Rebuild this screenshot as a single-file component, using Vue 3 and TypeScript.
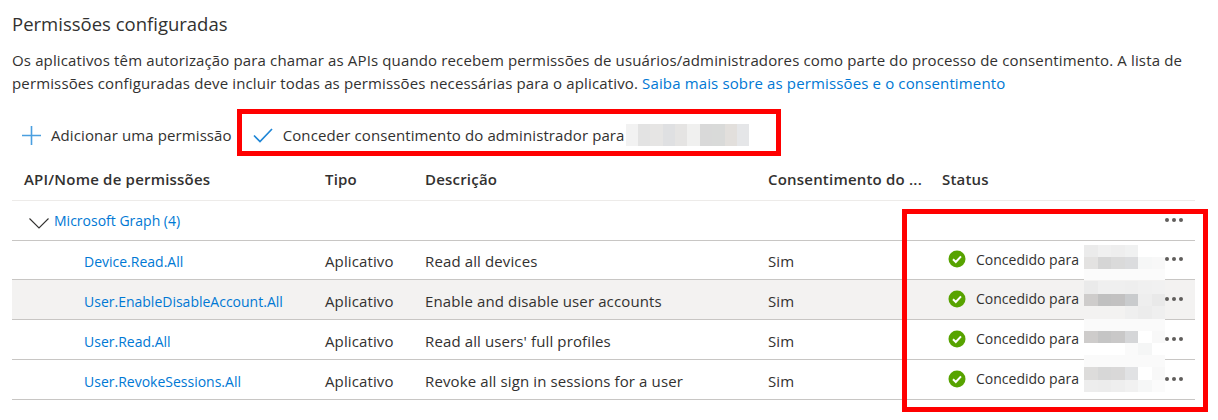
<script setup lang="ts">
interface Row { name: string; desc: string; hover?: boolean; top: number; height: number; cells: string[][] }
const rows: Row[] = [
  { name: 'Device.Read.All', desc: 'Read all devices', top: 4, height: 36, cells: [
    ['#ebebeb','#f0f0f0','#eeeeee','#f0f1f1','#ffffff','#ffffff'],
    ['#e3e2e1','#d5d5d5','#dadada','#dbdcde','#f6f7f7','#f8f8f8'],
    ['#fbfbfb','#fbfbfb','#fbfbfb','#fbfbfb','#fbfbfb','#fbfbfb']] },
  { name: 'User.EnableDisableAccount.All', desc: 'Enable and disable user accounts', hover: true, top: 1, height: 38, cells: [
    ['#eaeaea','#efefef','#efefef','#eeeeee','#f0f0f0','#f1f1f1'],
    ['#cecccb','#c0c0c0','#c2c1c1','#c9cbcd','#eeeeee','#e9e9e9'],
    ['#f3f2f1','#f3f2f1','#f3f2f1','#efefef','#ececec','#efefef']] },
  { name: 'User.Read.All', desc: "Read all users' full profiles", top: -1, height: 36, cells: [
    ['#fafafa','#fafafa','#fafafa','#fafafa','#fafafa','#fafafa'],
    ['#cecccb','#c5c5c5','#c9c8c8','#d5d6d8','#ffffff','#f8f8f8'],
    ['#ffffff','#ffffff','#ffffff','#fafafa','#f5f6f6','#ffffff']] },
  { name: 'User.RevokeSessions.All', desc: 'Revoke all sign in sessions for a user', top: -5, height: 37, cells: [
    ['#fafafa','#fafafa','#fafafa','#fafafa','#fafafa','#fafafa'],
    ['#dddcdb','#d7d7d7','#d9d8d8','#e1e2e4','#ffffff','#f8f8f8'],
    ['#ededed','#ececec','#eeeeee','#f1f1f1','#f6f7f7','#fbfbfb']] },
]
const adminCells = ['#f2f2f2','#e3e3e3','#e6e5e4','#dfe0e2','#e5e4e3','#f0f0ef','#d9d9d9','#d9dad9','#e2dfdc','#e5e6e8']
</script>

<template>
  <main class="page">
    <h2 class="title">Permissões configuradas</h2>
    <p class="intro">Os aplicativos têm autorização para chamar as APIs quando recebem permissões de usuários/administradores como parte do processo de consentimento. A lista de permissões configuradas deve incluir todas as permissões necessárias para o aplicativo. <a class="link">Saiba mais sobre as permissões e o consentimento</a></p>

    <div class="toolbar">
      <button class="tool add">
        <svg width="19" height="19" viewBox="0 0 19 19"><path d="M9.5 0v19M0 9.5h19" stroke="#4a9fe0" stroke-width="1.6" fill="none"/></svg>
        <span>Adicionar uma permissão</span>
      </button>
      <button class="tool grant">
        <svg width="20" height="15" viewBox="0 0 20 15"><path d="M1 7.5l6 6L19 1" stroke="#1f86d6" stroke-width="1.7" fill="none"/></svg>
        <span>Conceder consentimento do administrador para</span>
        <span class="mosaic-h">
          <i v-for="(c, i) in adminCells" :key="i" :style="{ background: c }"></i>
        </span>
      </button>
      <div class="mark mark-top"></div>
    </div>

    <section class="table">
      <div class="tr head">
        <div>API/Nome de permissões</div>
        <div>Tipo</div>
        <div>Descrição</div>
        <div>Consentimento do ...</div>
        <div>Status</div>
      </div>
      <div class="group">
        <svg class="chev" width="20" height="11" viewBox="0 0 20 11"><path d="M.5.5L10 10 19.5.5" stroke="#323130" stroke-width="1.1" fill="none"/></svg>
        <a class="link small">Microsoft Graph (4)</a>
        <span class="dots"><b></b><b></b><b></b></span>
      </div>
      <div v-for="r in rows" :key="r.name" class="tr row" :class="{ hover: r.hover }">
        <div class="name"><a class="link small">{{ r.name }}</a></div>
        <div>Aplicativo</div>
        <div>{{ r.desc }}</div>
        <div>Sim</div>
        <div class="status">
          <svg width="18" height="18" viewBox="0 0 18 18"><circle cx="9" cy="9" r="8.5" fill="#57a300"/><path d="M5 9.3l2.8 2.7L13 6.4" stroke="#fff" stroke-width="2" fill="none"/></svg>
          <span class="granted">Concedido para</span>
          <span class="dots"><b></b><b></b><b></b></span>
          <span class="mosaic" :style="{ top: r.top + 'px', height: r.height + 'px' }">
            <template v-for="(line, li) in r.cells" :key="li">
              <i v-for="(c, ci) in line" :key="ci" :style="{ background: c }"></i>
            </template>
          </span>
        </div>
      </div>
      <div class="mark mark-side"></div>
    </section>
  </main>
</template>

<style>
html, body { margin: 0; background: #fff; }
</style>

<style scoped>
.page {
  width: 1218px;
  height: 420px;
  box-sizing: border-box;
  padding: 12px 23px 0 12px;
  overflow: hidden;
  font-family: "Open Sans", "Noto Sans", sans-serif;
  font-size: 15px;
  color: #323130;
  background: #fff;
}
.title { margin: 0; font-size: 18.5px; line-height: 24px; font-weight: 400; }
.intro { margin: 13px 0 0; line-height: 23px; letter-spacing: 0.14px; }
.link { color: #0078d4; }
.small { font-size: 14px; letter-spacing: 0; }
.toolbar { position: relative; display: flex; align-items: center; height: 40px; margin-top: 20px; gap: 21px; }
.tool { display: flex; align-items: center; gap: 10px; border: 0; padding: 0; background: none; font: inherit; color: inherit; letter-spacing: 0.1px; }
.add { margin-left: 10px; }
.mosaic-h { display: flex; height: 22px; margin-left: -9px; }
.mosaic-h i { width: 12.4px; }
.mark { position: absolute; border: 5px solid #ff0000; box-sizing: border-box; pointer-events: none; }
.mark-top { left: 225px; top: -6px; width: 544px; height: 47px; }
.table { position: relative; letter-spacing: 0.12px; }
.tr { display: grid; grid-template-columns: 301px 100px 343px 174px 1fr; align-items: center; padding-left: 12px; }
.head { height: 42px; padding-top: 3px; font-weight: 600; border-bottom: 1px solid #edebe9; letter-spacing: 0.2px; }
.group { position: relative; display: flex; align-items: center; height: 39px; padding-left: 17px; gap: 5px; border-bottom: 1px solid #c8c6c4; }
.group .dots { margin-top: -2px; }
.chev { margin-top: 5px; }
.row { position: relative; height: 37px; padding-top: 2px; border-bottom: 1px solid #c8c6c4; }
.group + .row { height: 36px; }
.row.hover { background: #f3f2f1; }
.name { padding-left: 60px; }
.status { display: flex; align-items: center; box-sizing: border-box; padding: 0 0 4px 6px; height: 100%; }
.granted { margin-left: 10px; font-size: 14px; letter-spacing: 0; }
.dots { position: absolute; right: 12px; display: flex; gap: 3px; }
.dots b { width: 4px; height: 4px; border-radius: 50%; background: #605e5c; }
.mosaic { position: absolute; left: 1072px; width: 81px; display: grid; grid-template-columns: repeat(6, 1fr); grid-template-rows: repeat(3, 1fr); }
.mark-side { left: 890px; top: 54px; width: 306px; height: 203px; }
</style>
